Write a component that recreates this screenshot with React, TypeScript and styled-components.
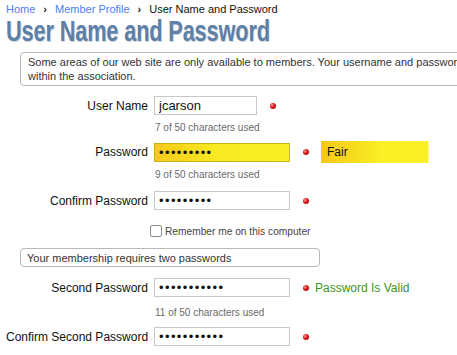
import React from "react";
import styled, { createGlobalStyle } from "styled-components";

const GlobalStyle = createGlobalStyle`
  html, body {
    margin: 0;
    padding: 0;
    background: #ffffff;
    overflow: hidden;
  }
  body {
    font-family: "Liberation Sans", Arial, sans-serif;
    color: #111;
  }
`;

const Page = styled.div`
  width: 700px;
  padding: 2px 0 0 6px;
`;

const Breadcrumb = styled.nav`
  display: flex;
  align-items: center;
  gap: 8px;
  font-size: 11px;
  line-height: 14px;
`;

const Crumb = styled.a<{ current?: boolean }>`
  color: ${(p) => (p.current ? "#111" : "#4a7ef5")};
  text-decoration: none;
`;

const Sep = styled.span`
  font-size: 11px;
  font-weight: bold;
  color: #222;
`;

const Title = styled.h1`
  margin: 0;
  font-weight: bold;
  font-size: 29px;
  line-height: 30px;
  letter-spacing: -0.2px;
  color: #5e7fa6;
  text-shadow: 1px 1px 0 #cdd5de;
`;

const TitleText = styled.span`
  display: inline-block;
  white-space: nowrap;
  transform: scaleX(0.75);
  transform-origin: left center;
`;

const Note = styled.div<{ wide?: boolean }>`
  margin: ${(p) => (p.wide ? "6px 0 0 14px" : "11px 0 0 14px")};
  width: ${(p) => (p.wide ? "640px" : "300px")};
  box-sizing: border-box;
  border: 1px solid #b8b8b8;
  border-radius: 4px;
  padding: ${(p) => (p.wide ? "2px 8px 2px 7px" : "2px 7px 1px 6px")};
  font-size: 11px;
  line-height: 14px;
  color: #333;
  white-space: nowrap;
`;

const FieldRow = styled.div<{ top: number }>`
  display: flex;
  align-items: center;
  margin-top: ${(p) => p.top}px;
`;

const Label = styled.label`
  width: 142px;
  margin-right: 6px;
  flex: none;
  text-align: right;
  font-size: 12px;
  white-space: nowrap;
  color: #111;
`;

const TextInput = styled.input<{ w: number; strength?: boolean }>`
  box-sizing: border-box;
  width: ${(p) => p.w}px;
  height: 19px;
  margin: 0;
  padding: 0 4px;
  border: 1px solid ${(p) => (p.strength ? "#c7b41a" : "#c8c8c8")};
  background: ${(p) =>
    p.strength ? "linear-gradient(90deg, #f6c91a 0%, #f8ea22 45%, #f9f024 100%)" : "#fff"};
  font-family: "Liberation Sans", Arial, sans-serif;
  font-size: 13px;
  letter-spacing: ${(p) => (p.type === "password" ? "1.4px" : "0")};
  color: #111;
  outline: none;
`;

const Dot = styled.span`
  display: inline-block;
  flex: none;
  width: 6px;
  height: 6px;
  border-radius: 50%;
  margin-left: 13px;
  background: radial-gradient(circle at 35% 35%, #ff9a9a 0%, #e0101a 45%, #a00008 100%);
`;

const Meter = styled.div`
  margin-left: 12px;
  width: 108px;
  height: 22px;
  box-sizing: border-box;
  padding-left: 6px;
  display: flex;
  align-items: center;
  font-size: 12px;
  color: #111;
  background: linear-gradient(90deg, #f6c71a 0%, #f8e622 45%, #f9f025 55%, #f9f025 100%);
  box-shadow: inset -48px 0 0 -47px rgba(255, 255, 255, 0.5);
`;

const Valid = styled.span`
  margin-left: 6px;
  font-size: 12px;
  color: #3c961a;
`;

const Hint = styled.div<{ top: number }>`
  margin: ${(p) => p.top}px 0 0 149px;
  font-size: 10px;
  line-height: 12px;
  color: #6a6a6a;
`;

const Remember = styled.label`
  display: flex;
  align-items: center;
  gap: 3px;
  margin: 15px 0 0 144px;
  font-size: 10.2px;
  color: #444;
`;

const Check = styled.span`
  width: 10px;
  height: 10px;
  border: 1px solid #8a8a8a;
  border-radius: 2px;
  background: #fff;
`;

export default function App() {
  return (
    <>
      <GlobalStyle />
      <Page>
        <Breadcrumb>
          <Crumb>Home</Crumb>
          <Sep>›</Sep>
          <Crumb>Member Profile</Crumb>
          <Sep>›</Sep>
          <Crumb current>User Name and Password</Crumb>
        </Breadcrumb>
        <Title>
          <TitleText>User Name and Password</TitleText>
        </Title>
        <Note wide>
          Some areas of our web site are only available to members. Your username and password
          allow you access to these areas
          <br />
          within the association.
        </Note>

        <FieldRow top={10}>
          <Label>User Name</Label>
          <TextInput w={103} defaultValue="jcarson" />
          <Dot />
        </FieldRow>
        <Hint top={7}>7 of 50 characters used</Hint>

        <FieldRow top={7}>
          <Label>Password</Label>
          <TextInput w={136} type="password" strength defaultValue="jcarson12" />
          <Dot />
          <Meter>Fair</Meter>
        </FieldRow>
        <Hint top={6}>9 of 50 characters used</Hint>

        <FieldRow top={10}>
          <Label>Confirm Password</Label>
          <TextInput w={136} type="password" defaultValue="jcarson12" />
          <Dot />
        </FieldRow>

        <Remember>
          <Check />
          Remember me on this computer
        </Remember>

        <Note>Your membership requires two passwords</Note>

        <FieldRow top={11}>
          <Label>Second Password</Label>
          <TextInput w={136} type="password" defaultValue="secondpass1" />
          <Dot />
          <Valid>Password Is Valid</Valid>
        </FieldRow>
        <Hint top={10}>11 of 50 characters used</Hint>

        <FieldRow top={8}>
          <Label>Confirm Second Password</Label>
          <TextInput w={136} type="password" defaultValue="secondpass1" />
          <Dot />
        </FieldRow>
      </Page>
    </>
  );
}
